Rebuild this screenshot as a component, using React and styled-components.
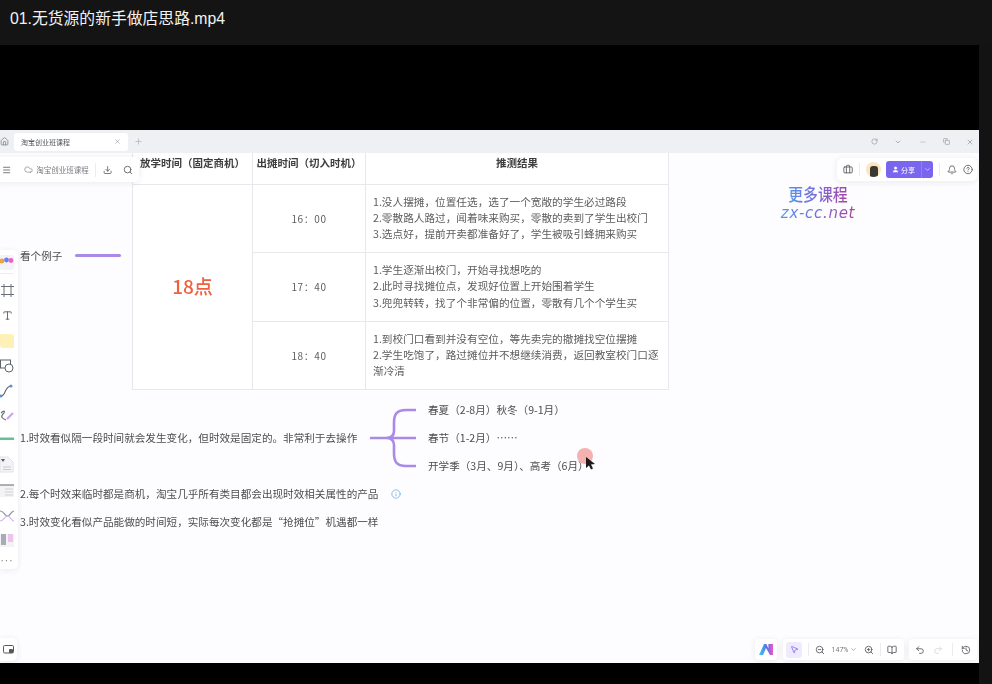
import React from 'react';
import styled, { createGlobalStyle } from 'styled-components';
import {
  Home, X, Plus, Menu, Cloud, Search, Download, RotateCw, ChevronDown, Minus, Copy,
  Briefcase, Bell, CircleHelp, Type, Info, MousePointer2, ZoomIn, ZoomOut,
  BookOpen, Undo2, Redo2, History, User,
} from 'lucide-react';

const Global = createGlobalStyle`
  html, body { margin: 0; padding: 0; background: #000; }
  body { font-family: "Liberation Sans", "Noto Sans CJK SC", sans-serif; }
  * { box-sizing: border-box; }
`;

const CJK = `"Roboto", "Noto Sans CJK SC", sans-serif`;
const SERIF = `"Noto Sans CJK SC", sans-serif`;

const Page = styled.div`
  width: 992px;
  height: 684px;
  overflow: hidden;
  display: flex;
  flex-direction: column;
  background: #000;
`;

const Header = styled.header`
  height: 45px;
  flex: none;
  background: #141414;
  color: #f2f2f2;
  font-family: "Liberation Sans", "Noto Sans CJK SC", sans-serif;
  font-size: 15.8px;
  line-height: 37px;
  padding-left: 10px;
`;

const Stage = styled.div`
  flex: 1;
  display: flex;
  padding-top: 85px;
  padding-bottom: 21px;
  background: #000;
`;

const Screen = styled.div`
  width: 979px;
  display: flex;
  flex-direction: column;
  filter: blur(0.45px);
  overflow: hidden;
`;

const SideStrip = styled.div`
  flex: 1;
  margin-top: -85px;
  margin-bottom: -21px;
  background: #131313;
`;

const TabBar = styled.div`
  height: 23px;
  flex: none;
  background: #eff0f4;
  display: flex;
  align-items: center;
  color: #8d8f96;
`;

const HomeSlot = styled.div`
  width: 14px;
  display: flex;
  justify-content: center;
  margin-left: -3px;
  margin-right: 3px;
`;

const Tab = styled.div`
  width: 114px;
  height: 18px;
  background: #fff;
  border-radius: 3px;
  display: flex;
  align-items: center;
  justify-content: space-between;
  padding: 0 7px;
  font-family: ${SERIF};
  font-size: 7px;
  color: #55575e;
`;

const NewTab = styled.div`
  margin-left: 6px;
  display: flex;
  color: #b4b6bc;
`;

const WindowButtons = styled.div`
  margin-left: auto;
  width: 108px;
  display: flex;
  justify-content: space-between;
  align-items: center;
  padding-right: 5px;
`;

const Canvas = styled.main`
  flex: 1;
  position: relative;
  background: #fdfcfe;
  overflow: hidden;
`;

const Sheet = styled.table`
  position: absolute;
  left: 132px;
  top: -1px;
  width: 536px;
  table-layout: fixed;
  border-collapse: collapse;
  background: #fff;
  font-family: ${SERIF};
  color: #5d5d5d;
  font-size: 10.65px;
`;

const Head = styled.th`
  height: 32px;
  border: 1px solid #e8e8ec;
  border-top: none;
  font-size: 10.5px;
  font-weight: 700;
  color: #3d3d3d;
  text-align: center;
  vertical-align: middle;
  padding: 0 0 10px;
  white-space: nowrap;
  width: ${(p) => p.$w}px;
`;

const Big = styled.td`
  border: 1px solid #e8e8ec;
  text-align: center;
  vertical-align: middle;
  color: #f0603f;
  font-size: 19px;
  font-weight: 500;
  padding-bottom: 4px;
`;

const Time = styled.td`
  height: ${(p) => p.$h}px;
  border: 1px solid #e8e8ec;
  text-align: center;
  vertical-align: middle;
  font-size: 10px;
  letter-spacing: 0.6px;
`;

const Notes = styled.td`
  border: 1px solid #e8e8ec;
  padding: 0 6px 0 7px;
  vertical-align: middle;
  line-height: 16.2px;
`;

const Note = styled.div``;

const Watermark = styled.div`
  position: absolute;
  left: 776px;
  top: 30px;
  width: 84px;
  text-align: center;
`;

const WatermarkTop = styled.div`
  font-family: ${SERIF};
  font-size: 17.5px;
  line-height: 22px;
  height: 22px;
  font-weight: 500;
  transform: scaleX(0.85);
  background: linear-gradient(90deg, #4e9bf0 0%, #7a6bd8 50%, #b03c9c 100%);
  -webkit-background-clip: text;
  background-clip: text;
  color: transparent;
`;

const WatermarkBottom = styled.div`
  font-family: "DejaVu Sans", sans-serif;
  font-size: 15px;
  line-height: 16px;
  letter-spacing: 0.7px;
  font-style: italic;
  white-space: nowrap;
  background: linear-gradient(90deg, #4e9bf0 0%, #7a6bd8 50%, #b03c9c 100%);
  -webkit-background-clip: text;
  background-clip: text;
  color: transparent;
`;

const Label = styled.div`
  position: absolute;
  left: ${(p) => p.$x}px;
  top: ${(p) => p.$y}px;
  font-family: ${SERIF};
  font-size: 10.6px;
  line-height: 16px;
  color: #4d4d4f;
  white-space: nowrap;
`;

const Rule = styled.div`
  position: absolute;
  left: 75px;
  top: 101px;
  width: 46px;
  height: 3px;
  border-radius: 2px;
  background: #a98ae8;
`;

const Brace = styled.svg`
  position: absolute;
  left: 370px;
  top: 254px;
`;

const InfoMark = styled.div`
  position: absolute;
  left: 391px;
  top: 336px;
  display: flex;
  color: #73b4ec;
`;

const Pointer = styled.div`
  position: absolute;
  left: 577px;
  top: 295px;
  width: 16px;
  height: 16px;
  border-radius: 50%;
  background: #f3b2b0;
`;

const Arrow = styled.svg`
  position: absolute;
  left: 585px;
  top: 303px;
`;

const Panel = styled.div`
  position: absolute;
  background: #fff;
  box-shadow: 0 1px 6px rgba(40, 40, 70, 0.09);
  display: flex;
  align-items: center;
  color: #55575e;
`;

const FilePanel = styled(Panel)`
  left: -4px;
  top: 4px;
  width: 143px;
  height: 25px;
  border-radius: 5px;
  padding: 0 6px 0 6px;
  font-family: ${SERIF};
  font-size: 7.5px;
`;

const CloudSlot = styled.span`
  display: flex;
  margin: 0 3px 0 13px;
`;

const FileName = styled.span`
  color: #777980;
  white-space: nowrap;
`;

const FileDivider = styled.span`
  width: 1px;
  height: 14px;
  background: #ececf0;
  margin: 0 7px 0 6px;
`;

const SearchSlot = styled.span`
  display: flex;
  margin-left: 11px;
`;

const SharePanel = styled(Panel)`
  left: 837px;
  top: 5px;
  width: 140px;
  height: 23px;
  border-radius: 5px;
  padding: 0 4px 0 6px;
`;

const Divider = styled.span`
  width: 1px;
  height: 13px;
  background: #ececf0;
  margin: 0 ${(p) => p.$m ?? 1}px;
`;

const Avatar = styled.div`
  width: 15px;
  height: 15px;
  border-radius: 50%;
  background: #fbe6bf;
  position: relative;
  overflow: hidden;
  flex: none;
  &::after {
    content: '';
    position: absolute;
    left: 4px;
    top: 4px;
    width: 8px;
    height: 11px;
    border-radius: 3px 3px 0 0;
    background: #3a3a30;
  }
`;

const ShareButton = styled.div`
  width: 47px;
  height: 17px;
  margin: 0 5px 0 5px;
  border-radius: 3px;
  background: #7a66ee;
  color: #fff;
  display: flex;
  align-items: center;
  padding-left: 6px;
  gap: 2px;
  font-family: ${SERIF};
  font-size: 7px;
  flex: none;
`;

const ShareCaret = styled.span`
  margin-left: auto;
  width: 12px;
  height: 17px;
  border-left: 1px solid #9180f2;
  display: flex;
  align-items: center;
  justify-content: center;
`;

const BellSlot = styled.span`
  display: flex;
  margin: 0 6px 0 6px;
`;

const Tools = styled(Panel)`
  left: 0;
  top: 97px;
  width: 18px;
  height: 319px;
  border-radius: 0 5px 5px 0;
  flex-direction: column;
  align-items: flex-start;
  padding-top: 3px;
  color: #5c6068;
`;

const ToolSlot = styled.div`
  height: ${(p) => p.$h}px;
  width: 14px;
  flex: none;
  display: flex;
  align-items: center;
  justify-content: center;
`;

const ToolRule = styled.div`
  width: 14px;
  height: 1px;
  background: #eeeef2;
  flex: none;
  margin: 1px 0 4px;
`;

const Sticky = styled.div`
  width: 14px;
  height: 14px;
  border-radius: 0 3px 0 3px;
  background: #fdf1b8;
`;

const Dots = styled.div`
  font-size: 10px;
  letter-spacing: 1px;
  color: #777;
  line-height: 8px;
`;

const MiniPanel = styled(Panel)`
  left: 0;
  bottom: 2px;
  width: 17px;
  height: 23px;
  border-radius: 0 5px 5px 0;
  justify-content: center;
`;

const AiPanel = styled(Panel)`
  left: 755px;
  bottom: 3px;
  width: 22px;
  height: 21px;
  border-radius: 4px;
  justify-content: center;
`;

const ZoomPanel = styled(Panel)`
  left: 783px;
  bottom: 3px;
  width: 121px;
  height: 21px;
  border-radius: 4px;
  padding: 0 7px 0 3px;
  justify-content: space-between;
`;

const ActiveTool = styled.div`
  width: 16px;
  height: 16px;
  border-radius: 3px;
  background: #efeafd;
  color: #7a66ee;
  display: flex;
  align-items: center;
  justify-content: center;
`;

const Percent = styled.span`
  font-family: ${CJK};
  font-size: 7px;
  color: #777980;
  display: flex;
  align-items: center;
  gap: 2px;
`;

const HistoryPanel = styled(Panel)`
  left: 909px;
  bottom: 3px;
  width: 68px;
  height: 21px;
  border-radius: 4px;
  padding: 0 6px;
  justify-content: space-between;
`;

const Faint = styled.span`
  display: flex;
  color: #d6d6da;
`;

const rows = [
  {
    time: '16：00',
    h: 68,
    lines: [
      '1.没人摆摊，位置任选，选了一个宽敞的学生必过路段',
      '2.零散路人路过，闻着味来购买，零散的卖到了学生出校门',
      '3.选点好，提前开卖都准备好了，学生被吸引蜂拥来购买',
    ],
  },
  {
    time: '17：40',
    h: 69,
    lines: [
      '1.学生逐渐出校门，开始寻找想吃的',
      '2.此时寻找摊位点，发现好位置上开始围着学生',
      '3.兜兜转转，找了个非常偏的位置，零散有几个个学生买',
    ],
  },
  {
    time: '18：40',
    h: 68,
    lines: [
      '1.到校门口看到并没有空位，等先卖完的撤摊找空位摆摊',
      '2.学生吃饱了，路过摊位并不想继续消费，返回教室校门口逐渐冷清',
    ],
  },
];

const Palette = () => (
  <svg width="14" height="15" viewBox="0 0 14 15">
    <rect x="0" y="0" width="14" height="15" rx="2" fill="#f3f2f8" />
    <circle cx="2" cy="6" r="2.4" fill="#f0a23c" />
    <circle cx="6.5" cy="5" r="2.4" fill="#6f7cf0" />
    <circle cx="11" cy="5.5" r="2.4" fill="#ec62c2" />
  </svg>
);

const FrameIcon = () => (
  <svg width="13" height="13" viewBox="0 0 13 13" fill="none" stroke="#6a6e76" strokeWidth="1">
    <path d="M3 0v13M10 0v13M0 2.5h13M0 10.5h13" />
  </svg>
);

const ShapeIcon = () => (
  <svg width="14" height="14" viewBox="0 0 14 14" fill="none" stroke="#5f636b" strokeWidth="1">
    <rect x="0.5" y="1" width="10" height="8" />
    <circle cx="9" cy="9" r="4" fill="#fff" />
  </svg>
);

const Connector = () => (
  <svg width="14" height="14" viewBox="0 0 14 14" fill="none">
    <path d="M1 12c5 0 3-9 10-10" stroke="#5b6070" strokeWidth="1.2" />
    <circle cx="1" cy="12" r="1.5" fill="#5b90e0" />
    <circle cx="11" cy="2" r="1.5" fill="#5b90e0" />
  </svg>
);

const Pen = () => (
  <svg width="14" height="14" viewBox="0 0 14 14" fill="none">
    <path d="M1 4c3-3 5-2 2 1s0 5 3 6" stroke="#6a6e78" strokeWidth="1.1" />
    <path d="M7 10l6-6" stroke="#c9a4ee" strokeWidth="2.2" />
  </svg>
);

const Marker = () => (
  <svg width="14" height="6" viewBox="0 0 14 6">
    <rect x="0" y="1.5" width="14" height="2.5" fill="#63c19a" />
  </svg>
);

const DocIcon = () => (
  <svg width="14" height="17" viewBox="0 0 14 17" fill="none">
    <path d="M0 1h8l5 5v10H0z" fill="#f4f4f7" stroke="#e2e2e8" />
    <path d="M1 3h4L3 6z" fill="#55585f" />
    <path d="M3 11h8M3 13.5h8" stroke="#c9cad0" />
  </svg>
);

const ListIcon = () => (
  <svg width="14" height="14" viewBox="0 0 14 14" fill="none">
    <rect x="0" y="1" width="14" height="12" fill="#f3f3f6" />
    <path d="M0 1h14" stroke="#7b7e86" strokeWidth="1.2" />
    <path d="M5 5h8M5 8h8M5 11h8" stroke="#cfd0d6" />
  </svg>
);

const MindIcon = () => (
  <svg width="14" height="14" viewBox="0 0 14 14" fill="none">
    <path d="M0 2c4 0 4 4 7 5s3-4 7-5" stroke="#8f939c" strokeWidth="1.2" />
    <path d="M0 12c4 0 4-4 7-5s3 4 7 5" stroke="#d9b7ee" strokeWidth="1.2" />
  </svg>
);

const TableIcon = () => (
  <svg width="14" height="15" viewBox="0 0 14 15">
    <rect x="0" y="1" width="14" height="13" fill="#f3f3f6" />
    <rect x="1" y="1" width="5" height="11" fill="#a9acb4" />
    <rect x="8" y="1" width="5" height="8" fill="#f0c3ee" />
  </svg>
);

const CardIcon = () => (
  <svg width="11" height="9" viewBox="0 0 11 9" fill="none">
    <rect x="0.5" y="0.5" width="10" height="7.5" rx="1.2" stroke="#55575e" />
    <rect x="6" y="4" width="4" height="4" rx="1" fill="#55575e" />
  </svg>
);

const AiLogo = () => (
  <svg width="14" height="11" viewBox="0 0 14 11">
    <defs>
      <linearGradient id="ai" x1="0" y1="0" x2="1" y2="0">
        <stop offset="0" stopColor="#3fd0ea" />
        <stop offset="0.55" stopColor="#5b6cf0" />
        <stop offset="1" stopColor="#e85cc4" />
      </linearGradient>
    </defs>
    <path d="M0 11L5 0h2.4l2 4.4V0H14v11h-3L7 4 4 11z" fill="url(#ai)" />
  </svg>
);

const App = () => (
  <Page>
    <Global />
    <Header>01.无货源的新手做店思路.mp4</Header>
    <Stage>
      <Screen>
        <TabBar>
          <HomeSlot><Home size={9} strokeWidth={2.4} /></HomeSlot>
          <Tab>
            淘宝创业班课程
            <X size={7} color="#8d8f96" />
          </Tab>
          <NewTab><Plus size={9} /></NewTab>
          <WindowButtons>
            <RotateCw size={7} />
            <ChevronDown size={8} />
            <Minus size={8} color="#b4b6bc" />
            <Copy size={7} />
            <X size={8} />
          </WindowButtons>
        </TabBar>
        <Canvas>
          <Sheet>
            <thead>
              <tr>
                <Head $w={120}>放学时间（固定商机）</Head>
                <Head $w={113}>出摊时间（切入时机）</Head>
                <Head $w={303}>推测结果</Head>
              </tr>
            </thead>
            <tbody>
              {rows.map((row, i) => (
                <tr key={row.time}>
                  {i === 0 && <Big rowSpan={3}>18点</Big>}
                  <Time $h={row.h}>{row.time}</Time>
                  <Notes>
                    {row.lines.map((line) => <Note key={line}>{line}</Note>)}
                  </Notes>
                </tr>
              ))}
            </tbody>
          </Sheet>

          <Watermark>
            <WatermarkTop>更多课程</WatermarkTop>
            <WatermarkBottom>zx-cc.net</WatermarkBottom>
          </Watermark>

          <Label $x={20} $y={95}>看个例子</Label>
          <Rule />
          <Label $x={20} $y={277}>1.时效看似隔一段时间就会发生变化，但时效是固定的。非常利于去操作</Label>
          <Label $x={20} $y={333}>2.每个时效来临时都是商机，淘宝几乎所有类目都会出现时效相关属性的产品</Label>
          <Label $x={20} $y={361}>3.时效变化看似产品能做的时间短，实际每次变化都是“抢摊位”机遇都一样</Label>
          <Label $x={428} $y={249}>春夏（2-8月）秋冬（9-1月）</Label>
          <Label $x={428} $y={277}>春节（1-2月）……</Label>
          <Label $x={428} $y={305}>开学季（3月、9月）、高考（6月）</Label>

          <Brace width="48" height="62" viewBox="0 0 48 62" fill="none">
            <path
              d="M46 3H36C26 3 24 8 24 16v8c0 5-3 7-8 7H0M16 31c5 0 8 2 8 7v8c0 8 2 13 12 13h10M16 31h30"
              stroke="#a98ae8"
              strokeWidth="2.6"
            />
          </Brace>

          <InfoMark><Info size={10} /></InfoMark>
          <Pointer />
          <Arrow width="11" height="14" viewBox="0 0 11 14">
            <path d="M1 1l9 7-4 .6 2 4-2 1-2-4-3 2.4z" fill="#1b1b1f" />
          </Arrow>

          <FilePanel>
            <Menu size={10} />
            <CloudSlot><Cloud size={9} color="#8d8f96" /></CloudSlot>
            <FileName>淘宝创业班课程</FileName>
            <FileDivider />
            <Download size={10} />
            <SearchSlot><Search size={10} /></SearchSlot>
          </FilePanel>

          <SharePanel>
            <Briefcase size={11} />
            <Divider $m={6} />
            <Avatar />
            <ShareButton>
              <User size={7} fill="#fff" />
              分享
              <ShareCaret><ChevronDown size={7} /></ShareCaret>
            </ShareButton>
            <Divider $m={1} />
            <BellSlot><Bell size={10} /></BellSlot>
            <CircleHelp size={11} />
          </SharePanel>

          <Tools>
            <ToolSlot $h={19}><Palette /></ToolSlot>
            <ToolRule />
            <ToolSlot $h={25}><FrameIcon /></ToolSlot>
            <ToolSlot $h={25}><Type size={11} /></ToolSlot>
            <ToolSlot $h={25}><Sticky /></ToolSlot>
            <ToolSlot $h={25}><ShapeIcon /></ToolSlot>
            <ToolSlot $h={25}><Connector /></ToolSlot>
            <ToolSlot $h={25}><Pen /></ToolSlot>
            <ToolSlot $h={22}><Marker /></ToolSlot>
            <ToolSlot $h={28}><DocIcon /></ToolSlot>
            <ToolSlot $h={25}><ListIcon /></ToolSlot>
            <ToolSlot $h={25}><MindIcon /></ToolSlot>
            <ToolSlot $h={25}><TableIcon /></ToolSlot>
            <ToolSlot $h={16}><Dots>···</Dots></ToolSlot>
          </Tools>

          <MiniPanel><CardIcon /></MiniPanel>

          <AiPanel><AiLogo /></AiPanel>

          <ZoomPanel>
            <ActiveTool><MousePointer2 size={9} /></ActiveTool>
            <Divider $m={0} />
            <ZoomOut size={10} />
            <Percent>147% <ChevronDown size={7} /></Percent>
            <ZoomIn size={10} />
            <Divider $m={0} />
            <BookOpen size={10} />
          </ZoomPanel>

          <HistoryPanel>
            <Undo2 size={10} />
            <Faint><Redo2 size={10} /></Faint>
            <Divider $m={0} />
            <History size={10} />
          </HistoryPanel>
        </Canvas>
      </Screen>
      <SideStrip />
    </Stage>
  </Page>
);

export default App;
